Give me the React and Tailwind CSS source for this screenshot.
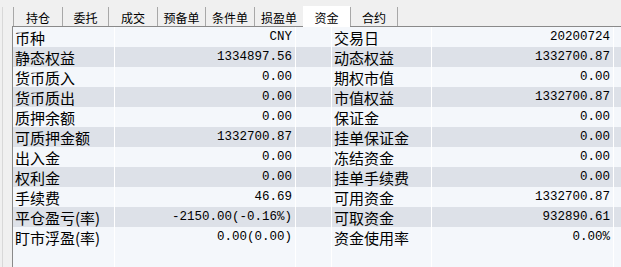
import React from "react";

const tabs = ["持仓", "委托", "成交", "预备单", "条件单", "损盈单", "资金", "合约"];
const tabWidths = [49, 46, 49, 48, 49, 49, 47, 47];

const rows = [
  ["币种", "CNY", "交易日", "20200724"],
  ["静态权益", "1334897.56", "动态权益", "1332700.87"],
  ["货币质入", "0.00", "期权市值", "0.00"],
  ["货币质出", "0.00", "市值权益", "1332700.87"],
  ["质押余额", "0.00", "保证金", "0.00"],
  ["可质押金额", "1332700.87", "挂单保证金", "0.00"],
  ["出入金", "0.00", "冻结资金", "0.00"],
  ["权利金", "0.00", "挂单手续费", "0.00"],
  ["手续费", "46.69", "可用资金", "1332700.87"],
  ["平仓盈亏(率)", "-2150.00(-0.16%)", "可取资金", "932890.61"],
  ["盯市浮盈(率)", "0.00(0.00)", "资金使用率", "0.00%"],
];

const cjk = { fontFamily: '"Noto Sans CJK SC", "Liberation Sans", sans-serif' };
const mono = { fontFamily: '"Liberation Mono", "Noto Sans CJK SC", monospace' };

function Row({ cells, shaded, empty }) {
  const bg = shaded ? "bg-[#dde1e8]" : "bg-[#f4f7fb]";
  return (
    <div className="flex h-[20px]">
      <div className={`w-[102px] ${bg} border-r border-white pl-[2px] flex items-center text-[15px] leading-none text-black`} style={cjk}>
        {!empty && cells[0]}
      </div>
      <div className={`w-[181px] ${bg} border-r border-white pr-[3px] flex items-center justify-end text-[12.5px] leading-none text-black`} style={mono}>
        {!empty && cells[1]}
      </div>
      <div className={`w-[36px] ${bg} border-r border-white`} />
      <div className={`w-[100px] ${bg} border-r border-white pl-[2px] flex items-center text-[15px] leading-none text-black`} style={cjk}>
        {!empty && cells[2]}
      </div>
      <div className={`w-[182px] ${bg} border-r border-white pr-[3px] flex items-center justify-end text-[12.5px] leading-none text-black`} style={mono}>
        {!empty && cells[3]}
      </div>
      <div className={`flex-1 ${bg}`} />
    </div>
  );
}

export default function App() {
  return (
    <div className="w-[621px] h-[267px] overflow-hidden bg-[#f0f0f0] flex flex-col">
      <div className="h-[3px] bg-[#a9c3dc]" />
      <div className="flex flex-1">
        <div className="w-[12px] flex">
          <div className="w-[3px] mt-[7px] border-r border-[#d8d8d8]" />
        </div>
        <div className="flex-1 flex flex-col">
          <div className="flex h-[26px] items-end pl-[1px]">
            {tabs.map((t, i) =>
              t === "资金" ? (
                <div
                  key={t}
                  className="h-[21px] bg-white flex items-center justify-center pt-[3px] text-[12px] text-black -mb-[1px] relative z-10"
                  style={{ ...cjk, width: tabWidths[i] }}
                >
                  {t}
                </div>
              ) : (
                <div
                  key={t}
                  className="h-[19px] border-l border-[#a8a8a8] flex items-center justify-center pt-[3px] text-[12px] text-black"
                  style={{ ...cjk, width: tabWidths[i] }}
                >
                  {t}
                </div>
              )
            )}
            <div className="h-[19px] border-l border-[#a8a8a8]" />
          </div>
          <div className="flex-1 border-t border-l border-[#8a8a8a] overflow-hidden">
            {rows.map((r, i) => (
              <Row key={i} cells={r} shaded={i % 2 === 1} />
            ))}
            <Row cells={[]} empty />
          </div>
        </div>
      </div>
    </div>
  );
}
